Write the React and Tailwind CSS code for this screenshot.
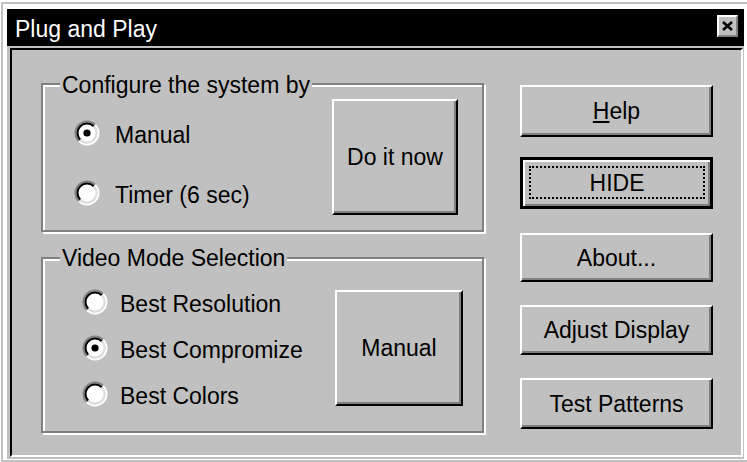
import React from 'react'

function Radio({ checked }) {
  // Win95-style radio: 12x12 drawn at ~2x
  const c = 13
  const arc = (r) => {
    const d = r * Math.SQRT1_2
    return {
      tl: `M ${c - d} ${c + d} A ${r} ${r} 0 0 1 ${c + d} ${c - d}`,
      br: `M ${c + d} ${c - d} A ${r} ${r} 0 0 1 ${c - d} ${c + d}`,
    }
  }
  const outer = arc(11.5)
  const inner = arc(9.5)
  return (
    <svg width="26" height="26" viewBox="0 0 26 26" className="shrink-0">
      <circle cx={c} cy={c} r="9" fill="#fff" />
      <path d={outer.tl} stroke="#808080" strokeWidth="2" fill="none" />
      <path d={outer.br} stroke="#fff" strokeWidth="2" fill="none" />
      <path d={inner.tl} stroke="#000" strokeWidth="2" fill="none" />
      <path d={inner.br} stroke="#dfdfdf" strokeWidth="2" fill="none" />
      {checked && <circle cx={c} cy={c} r="3.6" fill="#000" />}
    </svg>
  )
}

function RadioRow({ checked, label, gap }) {
  return (
    <div className={`flex items-center h-[26px] ${gap}`}>
      <Radio checked={checked} />
      <span className="mt-[3px] whitespace-nowrap">{label}</span>
    </div>
  )
}

function Button({ className = '', children }) {
  return (
    <div
      className={`flex items-center justify-center border-2 border-t-white border-l-white border-r-black border-b-black shadow-[inset_-2px_-2px_0_#808080] whitespace-nowrap ${className}`}
    >
      {children}
    </div>
  )
}

function GroupBox({ title, legendTop, className = '', children }) {
  return (
    <div
      className={`relative flex border-2 border-[#808080] shadow-[inset_2px_2px_0_#fff,2px_2px_0_#fff] ${className}`}
    >
      <span className={`absolute left-[17px] ${legendTop} px-[2px] bg-[#c0c0c0] whitespace-nowrap`}>
        {title}
      </span>
      {children}
    </div>
  )
}

export default function App() {
  return (
    <div className="w-[747px] h-[462px] bg-white pl-px pt-[2px] font-['Liberation_Sans',Arial,sans-serif] text-[23px] leading-[26px] text-black overflow-hidden">
      <div className="w-[746px] h-[460px] border-l-2 border-t-2 border-b-2 border-[#c0c0c0] bg-white pl-[4px] pr-[3px] pt-[5px] pb-px flex flex-col">
        {/* title bar */}
        <div className="h-[37px] shrink-0 bg-black flex items-start justify-between pl-[8px] pr-[6px]">
          <span className="text-white mt-[7px]">Plug and Play</span>
          <div className="mt-[6px] w-[21px] h-[22px] bg-[#c0c0c0] border-2 border-t-white border-l-white border-r-[#808080] border-b-[#808080] flex items-center justify-center">
            <svg width="11" height="10" viewBox="0 0 11 10">
              <path d="M1 1 L10 9 M10 1 L1 9" stroke="#000" strokeWidth="2.6" />
            </svg>
          </div>
        </div>

        {/* body */}
        <div className="flex-1 bg-[#c0c0c0] pl-[3px] pr-[1px] pt-[2px] pb-[2px] flex">
          <div className="flex-1 border-2 border-t-black border-l-black border-r-white border-b-white bg-[#c0c0c0] pl-[29px] pt-[33px] flex gap-[36px]">
            {/* left column */}
            <div className="w-[443px] flex flex-col">
              <GroupBox title="Configure the system by" legendTop="top-[-13px]" className="h-[149px]">
                <div className="pl-[31px] pt-[35px] flex flex-col gap-[34px]">
                  <RadioRow checked label="Manual" gap="gap-[15px]" />
                  <RadioRow label="Timer (6 sec)" gap="gap-[15px]" />
                </div>
                <Button className="ml-auto mr-[24px] mt-[14px] w-[126px] h-[116px]">Do it now</Button>
              </GroupBox>

              <GroupBox title="Video Mode Selection" legendTop="top-[-14px]" className="mt-[25px] h-[176px]">
                <div className="pl-[39px] pt-[30px] flex flex-col gap-[20px]">
                  <RadioRow label="Best Resolution" gap="gap-[12px]" />
                  <RadioRow checked label="Best Compromize" gap="gap-[12px]" />
                  <RadioRow label="Best Colors" gap="gap-[12px]" />
                </div>
                <Button className="ml-auto mr-[19px] mt-[31px] w-[128px] h-[116px]">Manual</Button>
              </GroupBox>
            </div>

            {/* right column */}
            <div className="w-[193px] pt-[2px] flex flex-col">
              <Button className="h-[52px]">
                <span>
                  <span className="underline underline-offset-2 decoration-2">H</span>elp
                </span>
              </Button>
              <div className="mt-[20px] h-[52px] flex border-[3px] border-black shadow-[inset_2px_2px_0_#fff,inset_-2px_-2px_0_#808080] pl-[6px] pr-[5px] pt-[6px] pb-[7px]">
                <div className="flex-1 border-2 border-dotted border-black flex items-center justify-center">
                  HIDE
                </div>
              </div>
              <Button className="mt-[24px] h-[49px]">About...</Button>
              <Button className="mt-[23px] h-[50px]">Adjust Display</Button>
              <Button className="mt-[23px] h-[51px]">Test Patterns</Button>
            </div>
          </div>
        </div>
      </div>
    </div>
  )
}
